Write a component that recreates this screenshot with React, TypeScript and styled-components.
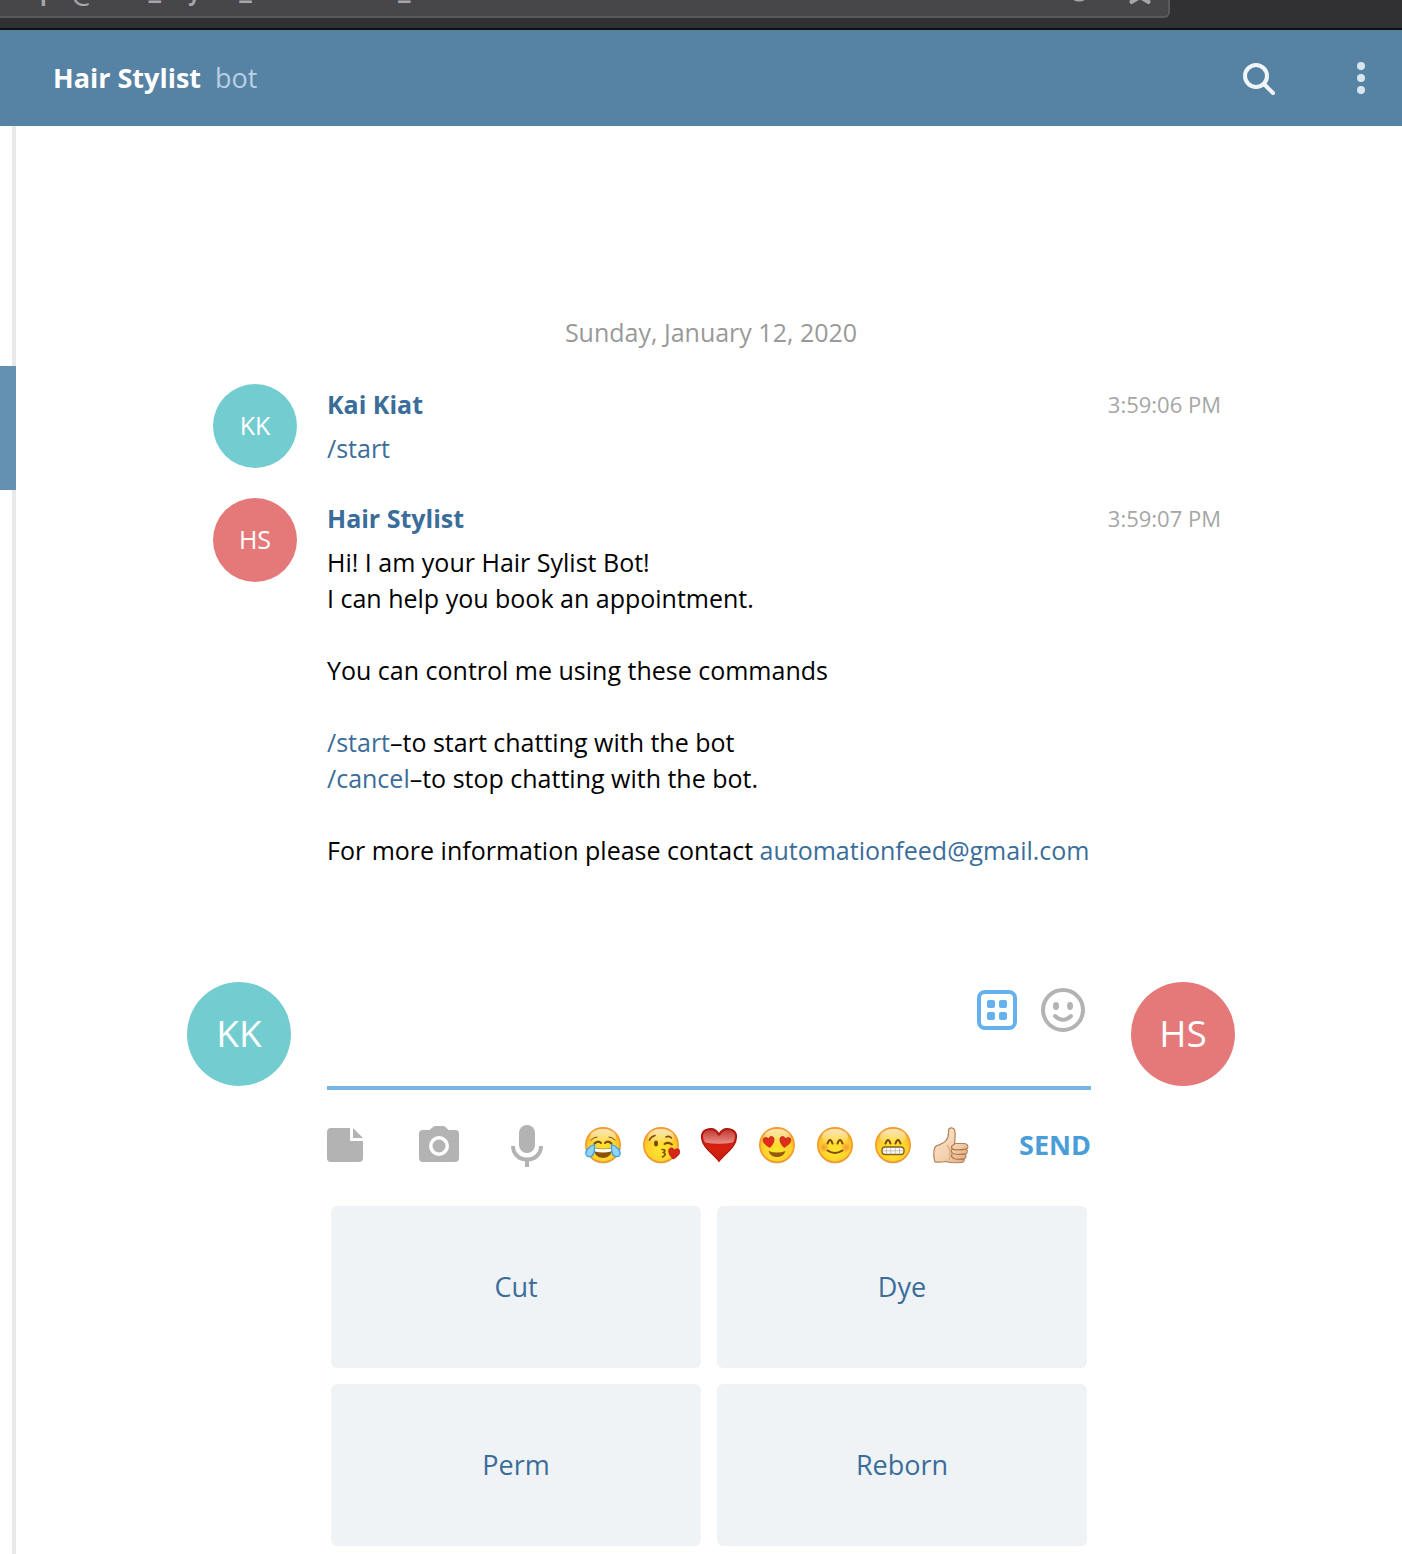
import React from "react";
import styled, { createGlobalStyle } from "styled-components";

const GlobalStyle = createGlobalStyle`
  * { box-sizing: border-box; }
  body { margin: 0; background: #fff; }
  button, input, textarea { font: inherit; }
  button { border: 0; padding: 0; background: none; cursor: pointer; }
  svg { display: block; }
`;

const Page = styled.div`
  display: flex;
  flex-direction: column;
  min-height: 100vh;
  color: #000;
  font-family: "Open Sans", "Noto Sans", sans-serif;
  font-size: 25px;
  font-weight: 500;
  line-height: 36px;
`;

/* Browser chrome: only the lower edge of the address bar is in view */
const Chrome = styled.div`
  display: flex;
  align-items: flex-end;
  height: 30px;
  padding: 0 232px 10px 0;
  overflow: hidden;
  background: #313133;
  border-bottom: 2px solid #101012;
`;

const AddressBar = styled.div`
  display: flex;
  flex: 1;
  align-items: center;
  gap: 36px;
  height: 56px;
  padding-right: 14px;
  background: #474749;
  border: 2px solid #5a5a5c;
  border-left: 0;
  border-radius: 0 6px 6px 0;
`;

const Address = styled.input`
  flex: 1;
  min-width: 0;
  height: 52px;
  padding: 0 0 0 40px;
  border: 0;
  outline: 0;
  background: none;
  color: #a6a6a9;
  font-family: Roboto, sans-serif;
  font-size: 28px;
`;

const Header = styled.header`
  display: flex;
  align-items: center;
  height: 96px;
  padding: 0 20px 0 53px;
  background: #5682a3;
`;

const Title = styled.h1`
  flex: 1;
  margin: 0;
  color: #fff;
  font-size: 27px;
  font-weight: 700;
`;

const Kind = styled.span`
  margin-left: 14px;
  color: #b9cfe3;
  font-weight: 400;
`;

const HeaderButton = styled.button`
  display: grid;
  place-items: center;
  width: 42px;
  height: 42px;
  margin-left: 60px;
`;

const Body = styled.div`
  display: flex;
  flex: 1;
`;

const Rail = styled.aside`
  width: 16px;
  padding-top: 240px;
  border-right: 4px solid #e8e9eb;
`;

const ActiveDialog = styled.div`
  height: 124px;
  margin-right: -4px;
  background: #6490b1;
`;

const Chat = styled.main`
  display: flex;
  flex: 1;
  flex-direction: column;
  align-items: center;
  min-width: 0;
  padding-left: 4px;
`;

const History = styled.section`
  display: flex;
  flex: 1;
  flex-direction: column;
  justify-content: flex-end;
  gap: 30px;
  width: 100%;
  max-width: 1048px;
  padding: 40px 14px 114px 26px;
`;

const DateSplit = styled.div`
  margin: 0 12px 4px 0;
  color: #999;
  text-align: center;
`;

const Message = styled.article`
  display: flex;
  gap: 30px;
`;

const Avatar = styled.div<{ $tone: string; $large?: boolean }>`
  display: grid;
  flex: none;
  place-items: center;
  width: ${(p) => (p.$large ? 104 : 84)}px;
  height: ${(p) => (p.$large ? 104 : 84)}px;
  padding-bottom: 2px;
  border-radius: 50%;
  background: ${(p) => p.$tone};
  color: #fff;
  font-size: ${(p) => (p.$large ? 37 : 25)}px;
`;

const MessageBody = styled.div`
  flex: 1;
  padding-top: 2px;
`;

const MessageHead = styled.div`
  display: flex;
  justify-content: space-between;
  margin-bottom: 8px;
`;

const Author = styled.a`
  color: #3a6d99;
  font-weight: 700;
  text-decoration: none;
`;

const Time = styled.time`
  color: #a6a6a6;
  font-size: 22px;
`;

const Line = styled.div`
  min-height: 36px;
`;

const Link = styled.a`
  color: #3a6d99;
  text-decoration: none;
`;

const Compose = styled.form`
  display: flex;
  width: 100%;
  max-width: 1048px;
`;

const ComposeMain = styled.div`
  flex: 1;
  min-width: 0;
  padding: 0 40px 0 36px;
`;

const Field = styled.div`
  display: flex;
  align-items: flex-start;
  gap: 24px;
  height: 108px;
  padding: 6px 6px 0 0;
  border-bottom: 4px solid #73b5e6;
`;

const Draft = styled.textarea`
  flex: 1;
  min-width: 0;
  height: 92px;
  padding: 4px 0;
  border: 0;
  outline: 0;
  resize: none;
  background: none;
`;

const Tools = styled.div`
  display: flex;
  align-items: center;
  gap: 52px;
  height: 110px;
  margin-bottom: 6px;
`;

const Emojis = styled.div`
  display: flex;
  gap: 20px;
  margin: 0 -8px 0 -11px;
`;

const Send = styled.button`
  margin-left: auto;
  color: #499dd9;
  font-size: 27px;
  font-weight: 700;
`;

const Keyboard = styled.div`
  display: grid;
  grid-template-columns: 1fr 1fr;
  gap: 16px;
  padding: 0 4px 8px;
`;

const Key = styled.button`
  height: 162px;
  border-radius: 6px;
  background: #f0f3f6;
  color: #3a6d99;
  font-size: 27px;
`;

const TEAL = "#73cdd0";
const CORAL = "#e57979";

const Face = ({ children }: { children: React.ReactNode }) => (
  <>
    <ellipse cx="19" cy="20.5" rx="17" ry="17" fill="#8a8074" opacity=".5" />
    <circle cx="19" cy="19" r="17.2" fill="url(#faceFill)" stroke="#f49a2c" strokeWidth="1.6" />
    <ellipse cx="19" cy="11" rx="13" ry="8" fill="url(#shine)" />
    {children}
  </>
);

const ink = { fill: "none", stroke: "#7a4a08", strokeWidth: 2, strokeLinecap: "round" as const };
const HEART = "M0 5.5C-7 .5-6.5-5-3-5-1.2-5-.3-4 0-2.8.3-4 1.2-5 3-5 6.5-5 7 .5 0 5.5Z";

const emojis: { label: string; art: React.ReactNode }[] = [
  {
    label: "Face with tears of joy",
    art: (
      <Face>
        <path d="M7 14Q10 11 13 11M31 14Q28 11 25 11" {...ink} strokeWidth="1" />
        <path d="M10.5 17.5Q14 14 17 17M21 17Q24 14 27.5 17.5" {...ink} />
        <path d="M9.5 21.5Q19 24 28.5 21.5Q28 32 19 32T9.5 21.5Z" fill="#8c5208" />
        <path d="M10.5 22.2Q19 24.5 27.5 22.2L27 25.5Q19 27.5 11 25.5Z" fill="#fff" />
        <path d="M10.5 18.5C5 20 1 25 2 28.5 3.5 32 9 31 10 26.5Q10.8 22 10.5 18.5Z" fill="#8fd4fa" stroke="#36a0e4" strokeWidth="1.2" />
        <path d="M27.5 18.5C33 20 37 25 36 28.5 34.5 32 29 31 28 26.5Q27.2 22 27.5 18.5Z" fill="#8fd4fa" stroke="#36a0e4" strokeWidth="1.2" />
      </Face>
    ),
  },
  {
    label: "Face blowing a kiss",
    art: (
      <Face>
        <path d="M7.5 14Q9 10.5 13 9.5M24 11Q27 9.5 29.5 12" {...ink} strokeWidth="1.6" />
        <ellipse cx="14" cy="17.5" rx="2" ry="3" fill="#7a4a08" />
        <path d="M22.5 18Q26 15.5 30 18.5" {...ink} />
        <path d="M20 23.5Q25 23.5 21.5 26.5Q25.5 28 20.5 31" {...ink} strokeWidth="1.6" />
        <path d={HEART} transform="translate(32 27.5) rotate(8) scale(1.02)" fill="#d82518" stroke="#9e160d" strokeWidth=".7" />
      </Face>
    ),
  },
  {
    label: "Red heart",
    art: (
      <>
        <path d="M19 35.5C13 27.5 1.5 21 1.5 11 1.5 2 14.5-.5 19 8 23.5-.5 36.5 2 36.5 11 36.5 21 25 27.5 19 35.5Z" fill="url(#heartFill)" stroke="#a9150d" strokeWidth="1.2" />
        <path d="M3 10C3.5 3 14 1.5 18 9.5H20C24 1.5 34.5 3 35 10Q34.8 14 33 16.5Q19 19 5 16.5Q3.2 14 3 10Z" fill="url(#heartShine)" />
      </>
    ),
  },
  {
    label: "Smiling face with heart eyes",
    art: (
      <Face>
        <path d={HEART} transform="translate(11 16) rotate(-10)" fill="#e22c1c" stroke="#ad1b10" strokeWidth=".6" />
        <path d={HEART} transform="translate(27 16) rotate(10)" fill="#e22c1c" stroke="#ad1b10" strokeWidth=".6" />
        <path d="M10.5 25Q19 28 27.5 25Q25.5 31 19 31T10.5 25Z" fill="#96580c" />
      </Face>
    ),
  },
  {
    label: "Smiling face with smiling eyes",
    art: (
      <Face>
        <circle cx="8" cy="21.5" r="5" fill="url(#blush)" />
        <circle cx="30" cy="21.5" r="5" fill="url(#blush)" />
        <path d="M11.5 17.5Q14 10.5 16.5 17.5M21.5 17.5Q24 10.5 26.5 17.5" {...ink} />
        <path d="M11.5 24.5Q19 29.5 26.5 24.5" {...ink} />
      </Face>
    ),
  },
  {
    label: "Beaming face",
    art: (
      <Face>
        <path d="M11.5 17.5Q14 10.5 16.5 17.5M21.5 17.5Q24 10.5 26.5 17.5" {...ink} />
        <rect x="8" y="21" width="22" height="7.5" rx="3.2" fill="#fff" stroke="#87601f" strokeWidth="1.4" />
        <path d="M9 24.8H29M12.5 22V28M16.8 22V28M21.2 22V28M25.5 22V28" stroke="#b8b2a8" strokeWidth=".8" />
      </Face>
    ),
  },
  {
    label: "Thumbs up",
    art: (
      <>
        <path d="M3 21C6 18 11 19 14 14.5 17 11 16.5 8 16.5 4.5 16.5 1 22.5.5 23 6 23.3 10 23 14 22.5 17.5H32C36.5 17.5 36.5 22 34.5 23 36 25 35 27.5 33.5 28 34.5 30.5 33.5 32.5 32 33 32.5 35.5 31.5 36.5 29 36.5 23 37 18 37 14 35.5Q8 36.5 3 36Q.5 28 3 21Z" fill="url(#skin)" stroke="#b58158" strokeWidth="1.2" />
        <path d="M23 18Q18 20 20 22.5T34.5 23M20 23Q18 26 21 27.5T33.5 28M20 28Q18.5 31 22 32.5T32 33" fill="none" stroke="#b5794e" strokeWidth="1.3" />
        <path d="M15 19Q20 25 17 34" fill="none" stroke="#d9a982" strokeWidth="1.2" />
      </>
    ),
  },
];

const EmojiDefs = () => (
  <svg width="0" height="0" aria-hidden="true">
    <defs>
      <radialGradient id="faceFill" cx=".5" cy=".65" r=".65">
        <stop offset="0" stopColor="#ffe62e" />
        <stop offset=".65" stopColor="#fecf2b" />
        <stop offset="1" stopColor="#fba92e" />
      </radialGradient>
      <linearGradient id="shine" x2="0" y2="1">
        <stop offset="0" stopColor="#fff" stopOpacity=".7" />
        <stop offset="1" stopColor="#fff" stopOpacity="0" />
      </linearGradient>
      <radialGradient id="blush">
        <stop offset="0" stopColor="#fb7b3c" stopOpacity=".75" />
        <stop offset="1" stopColor="#fb7b3c" stopOpacity="0" />
      </radialGradient>
      <linearGradient id="heartFill" x2="0" y2="1">
        <stop offset="0" stopColor="#b3170f" />
        <stop offset=".6" stopColor="#da2110" />
        <stop offset="1" stopColor="#c41c0d" />
      </linearGradient>
      <linearGradient id="heartShine" x2="0" y2="1">
        <stop offset="0" stopColor="#fff" stopOpacity=".15" />
        <stop offset="1" stopColor="#fff" stopOpacity=".5" />
      </linearGradient>
      <linearGradient id="skin" x2="1" y2="1">
        <stop offset="0" stopColor="#fbe8d0" />
        <stop offset=".6" stopColor="#f3cfac" />
        <stop offset="1" stopColor="#dca67c" />
      </linearGradient>
    </defs>
  </svg>
);

const replies = ["Cut", "Dye", "Perm", "Reborn"];

export default function App() {
  return (
    <Page>
      <GlobalStyle />
      <EmojiDefs />
      <Chrome>
        <AddressBar>
          <Address aria-label="Address" defaultValue="p=@Hair_Stylist_Automation_bot" />
          <svg width="24" height="24" viewBox="0 0 24 24" fill="none" stroke="#a6a6a9" strokeWidth="3">
            <circle cx="13" cy="12" r="10" />
          </svg>
          <svg width="28" height="28" viewBox="0 0 28 28" fill="none" stroke="#a6a6a9" strokeWidth="4" strokeLinejoin="round">
            <path d="M14 2L17.5 10.5 26 11 19.5 17 22.5 26 14 21 5.5 26 8.5 17 2 11 10.5 10.5Z" />
          </svg>
        </AddressBar>
      </Chrome>
      <Header>
        <Title>
          Hair Stylist<Kind>bot</Kind>
        </Title>
        <HeaderButton type="button" aria-label="Search">
          <svg width="36" height="36" viewBox="0 0 36 36" fill="none" stroke="#f1f5f8" strokeWidth="4" strokeLinecap="round">
            <circle cx="15" cy="16" r="11" />
            <path d="M23.5 24.5L32 33" />
          </svg>
        </HeaderButton>
        <HeaderButton type="button" aria-label="More">
          <svg width="8" height="32" viewBox="0 0 8 32" fill="#d8e5f0">
            <circle cx="4" cy="4" r="4" />
            <circle cx="4" cy="16" r="4" />
            <circle cx="4" cy="28" r="4" />
          </svg>
        </HeaderButton>
      </Header>
      <Body>
        <Rail>
          <ActiveDialog />
        </Rail>
        <Chat>
          <History>
            <DateSplit>Sunday, January 12, 2020</DateSplit>
            <Message>
              <Avatar $tone={TEAL}>KK</Avatar>
              <MessageBody>
                <MessageHead>
                  <Author href="#kai">Kai Kiat</Author>
                  <Time>3:59:06 PM</Time>
                </MessageHead>
                <Line>
                  <Link href="#start">/start</Link>
                </Line>
              </MessageBody>
            </Message>
            <Message>
              <Avatar $tone={CORAL}>HS</Avatar>
              <MessageBody>
                <MessageHead>
                  <Author href="#stylist">Hair Stylist</Author>
                  <Time>3:59:07 PM</Time>
                </MessageHead>
                <Line>Hi! I am your Hair Sylist Bot!</Line>
                <Line>I can help you book an appointment.</Line>
                <Line />
                <Line>You can control me using these commands</Line>
                <Line />
                <Line>
                  <Link href="#start">/start</Link>–to start chatting with the bot
                </Line>
                <Line>
                  <Link href="#cancel">/cancel</Link>–to stop chatting with the bot.
                </Line>
                <Line />
                <Line>
                  For more information please contact{" "}
                  <Link href="mailto:automationfeed@gmail.com">automationfeed@gmail.com</Link>
                </Line>
              </MessageBody>
            </Message>
          </History>
          <Compose onSubmit={(e) => e.preventDefault()}>
            <Avatar $tone={TEAL} $large>
              KK
            </Avatar>
            <ComposeMain>
              <Field>
                <Draft aria-label="Message" />
                <button type="button" aria-label="Bot keyboard">
                  <svg width="40" height="44" viewBox="0 0 40 44" fill="#64b1ee">
                    <rect x="2" y="4" width="36" height="36" rx="6" fill="none" stroke="#64b1ee" strokeWidth="4" />
                    <rect x="10" y="12" width="8" height="8" rx="2" />
                    <rect x="22" y="12" width="8" height="8" rx="2" />
                    <rect x="10" y="24" width="8" height="8" rx="2" />
                    <rect x="22" y="24" width="8" height="8" rx="2" />
                  </svg>
                </button>
                <button type="button" aria-label="Emoji">
                  <svg width="44" height="44" viewBox="0 0 44 44" fill="none" stroke="#b3b3b3" strokeWidth="4" strokeLinecap="round">
                    <circle cx="22" cy="22" r="20" />
                    <ellipse cx="15" cy="18" rx="3" ry="4" fill="#b3b3b3" stroke="none" />
                    <ellipse cx="29" cy="18" rx="3" ry="4" fill="#b3b3b3" stroke="none" />
                    <path d="M14 28Q22 35.5 30 28" />
                  </svg>
                </button>
              </Field>
              <Tools>
                <button type="button" aria-label="Attach file">
                  <svg width="40" height="42" viewBox="0 0 40 42" fill="#b3b3b3">
                    <path d="M4 4H23V17H36V34Q36 38 32 38H4Q0 38 0 34V8Q0 4 4 4Z" />
                    <path d="M26 4L36 14H26Z" />
                  </svg>
                </button>
                <button type="button" aria-label="Send photo">
                  <svg width="40" height="42" viewBox="0 0 40 42" fill="#b3b3b3">
                    <path fillRule="evenodd" d="M4 6H10.5L14 3Q15 2 16.5 2H24Q25.5 2 26.5 3L29.5 6H36Q40 6 40 10V34Q40 38 36 38H4Q0 38 0 34V10Q0 6 4 6ZM20 12A10 10 0 1 0 20 32A10 10 0 1 0 20 12Z" />
                    <circle cx="20" cy="22" r="6.5" />
                  </svg>
                </button>
                <button type="button" aria-label="Record voice">
                  <svg width="32" height="44" viewBox="0 0 32 44" fill="none" stroke="#b3b3b3" strokeWidth="4">
                    <rect x="8" y="2" width="16" height="28" rx="8" fill="#b3b3b3" stroke="none" />
                    <path d="M2 23C2 31 8 36.5 16 36.5S30 31 30 23" />
                    <path d="M16 36V44" />
                  </svg>
                </button>
                <Emojis>
                  {emojis.map((e) => (
                    <button type="button" key={e.label} aria-label={e.label}>
                      <svg width="38" height="40" viewBox="0 -1 38 40">
                        {e.art}
                      </svg>
                    </button>
                  ))}
                </Emojis>
                <Send type="submit">SEND</Send>
              </Tools>
              <Keyboard>
                {replies.map((r) => (
                  <Key type="button" key={r}>
                    {r}
                  </Key>
                ))}
              </Keyboard>
            </ComposeMain>
            <Avatar $tone={CORAL} $large>
              HS
            </Avatar>
          </Compose>
        </Chat>
      </Body>
    </Page>
  );
}
